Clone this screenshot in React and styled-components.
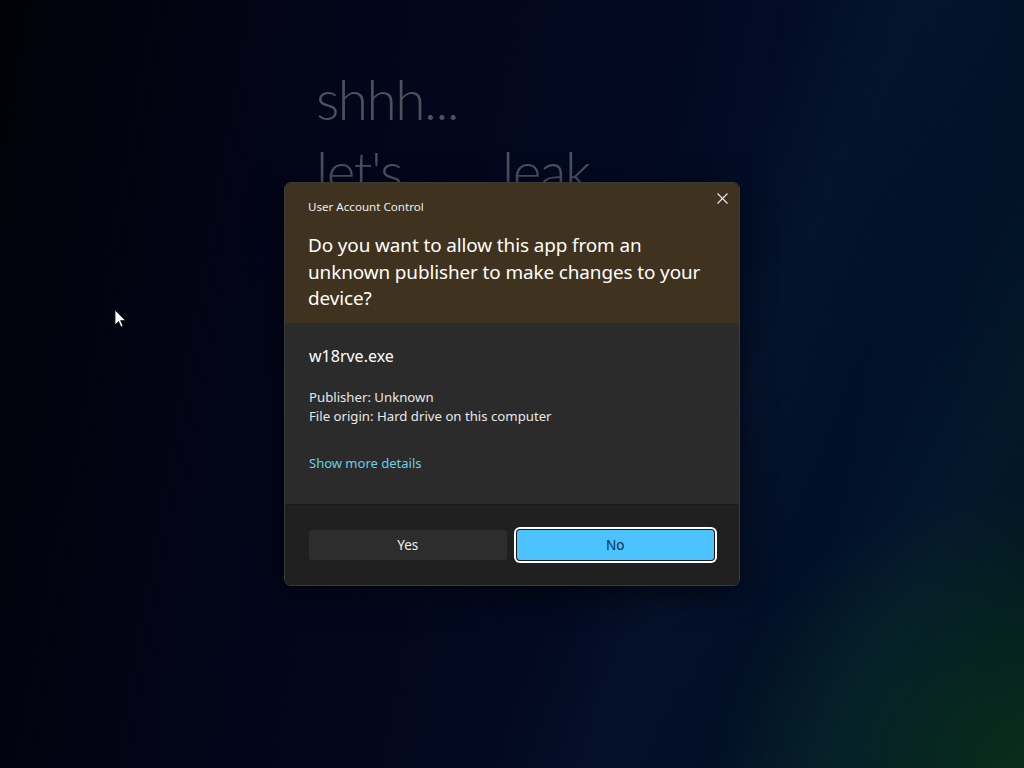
import React from "react";
import styled, { createGlobalStyle } from "styled-components";

const Global = createGlobalStyle`
  html, body { margin: 0; padding: 0; height: 100%; overflow: hidden; }
  body { background: #020414; font-family: "Noto Sans", "Open Sans", sans-serif; }
  #root { height: 100%; }
`;

const Desktop = styled.div`
  position: relative;
  width: 100vw;
  height: 100vh;
  overflow: hidden;
  background:
    radial-gradient(ellipse 340px 280px at 1040px 770px, rgba(12, 62, 24, 0.65), rgba(8, 40, 20, 0) 100%),
    linear-gradient(112deg, rgba(0,0,0,0) 60%, rgba(20, 40, 70, 0.18) 68%, rgba(0,0,0,0) 76%),
    linear-gradient(118deg, rgba(0,0,0,0) 78%, rgba(20, 50, 70, 0.16) 86%, rgba(0,0,0,0) 94%),
    linear-gradient(100deg, #010208 0%, #03051a 30%, #020a22 60%, #01122a 85%, #021420 100%);
`;

const Backdrop = styled.div`
  padding: 64px 0 0 316px;
  display: flex;
  flex-direction: column;
  gap: 2px;
`;

const BgLine = styled.div`
  display: grid;
  grid-template-columns: 186px auto;
  font-family: Lato, "Open Sans", sans-serif;
  font-weight: 300;
  font-size: 55px;
  line-height: 70px;
  color: #4c515c;
  letter-spacing: -1.5px;
`;

const Overlay = styled.div`
  position: absolute;
  inset: 0;
  display: flex;
  align-items: center;
  justify-content: center;
`;

const Dialog = styled.div`
  width: 454px;
  border-radius: 7px;
  overflow: hidden;
  background: #202020;
  border: 1px solid #3a3a3a;
  box-shadow: 0 8px 32px rgba(0, 0, 0, 0.55);
`;

const Header = styled.div`
  position: relative;
  background: #3f321e;
  padding: 16px 24px 11px 23px;
`;

const Caption = styled.div`
  font-size: 11.6px;
  line-height: 16px;
  color: #eee;
`;

const Close = styled.button`
  position: absolute;
  top: 0;
  right: 2px;
  width: 30px;
  height: 30px;
  border: none;
  background: transparent;
  display: flex;
  align-items: center;
  justify-content: center;
  padding: 0;
  cursor: pointer;
`;

const Heading = styled.h1`
  margin: 17px 0 0;
  font-weight: 400;
  font-size: 18.9px;
  line-height: 26.5px;
  color: #ffffff;
  letter-spacing: -0.1px;
`;

const Body = styled.div`
  background: #2b2b2b;
  padding: 21px 24px 31px 24px;
  border-bottom: 1px solid #1a1a1a;
`;

const FileName = styled.div`
  font-size: 16px;
  line-height: 24px;
  color: #ffffff;
`;

const Meta = styled.div`
  margin-top: 20px;
  font-size: 13.2px;
  line-height: 19px;
  color: #e8e8e8;
`;

const More = styled.a`
  display: block;
  margin-top: 28px;
  font-size: 13px;
  line-height: 19px;
  color: #6bcfe8;
  cursor: pointer;
`;

const Footer = styled.div`
  background: #202020;
  padding: 25px 25px 25px 24px;
  display: grid;
  grid-template-columns: 1fr 1fr;
  gap: 10px;
`;

const Button = styled.button`
  height: 30px;
  border-radius: 3px;
  font-family: "Noto Sans", "Open Sans", sans-serif;
  font-size: 13.5px;
  cursor: pointer;
  border: none;
  background: ${(p) => (p.$primary ? "#4cc2ff" : "#2d2d2d")};
  color: ${(p) => (p.$primary ? "#062c4a" : "#f2f2f2")};
  box-shadow: ${(p) =>
    p.$primary ? "0 0 0 1px #1a1a1a, 0 0 0 3px #ffffff" : "none"};
`;

const Cursor = styled.svg`
  position: absolute;
  left: 114px;
  top: 309px;
`;

export default function App() {
  return (
    <>
      <Global />
      <Desktop>
        <Backdrop>
          <BgLine>shhh...</BgLine>
          <BgLine>
            <span>let's</span>
            <span>leak</span>
          </BgLine>
        </Backdrop>
        <Cursor width="14" height="20" viewBox="0 0 14 20">
          <path d="M1 1 L1 16 L4.5 12.5 L7 18 L9 17 L6.6 11.6 L11.5 11.6 Z" fill="#ffffff" stroke="#111" strokeWidth="0.8" />
        </Cursor>
        <Overlay>
          <Dialog>
            <Header>
              <Caption>User Account Control</Caption>
              <Close aria-label="Close">
                <svg width="11" height="11" viewBox="0 0 11 11">
                  <path d="M0.5 0.5 L10.5 10.5 M10.5 0.5 L0.5 10.5" stroke="#e6e6e6" strokeWidth="1.2" />
                </svg>
              </Close>
              <Heading>
                Do you want to allow this app from an unknown publisher to make changes to your device?
              </Heading>
            </Header>
            <Body>
              <FileName>w18rve.exe</FileName>
              <Meta>
                Publisher: Unknown
                <br />
                File origin: Hard drive on this computer
              </Meta>
              <More>Show more details</More>
            </Body>
            <Footer>
              <Button>Yes</Button>
              <Button $primary>No</Button>
            </Footer>
          </Dialog>
        </Overlay>
      </Desktop>
    </>
  );
}
